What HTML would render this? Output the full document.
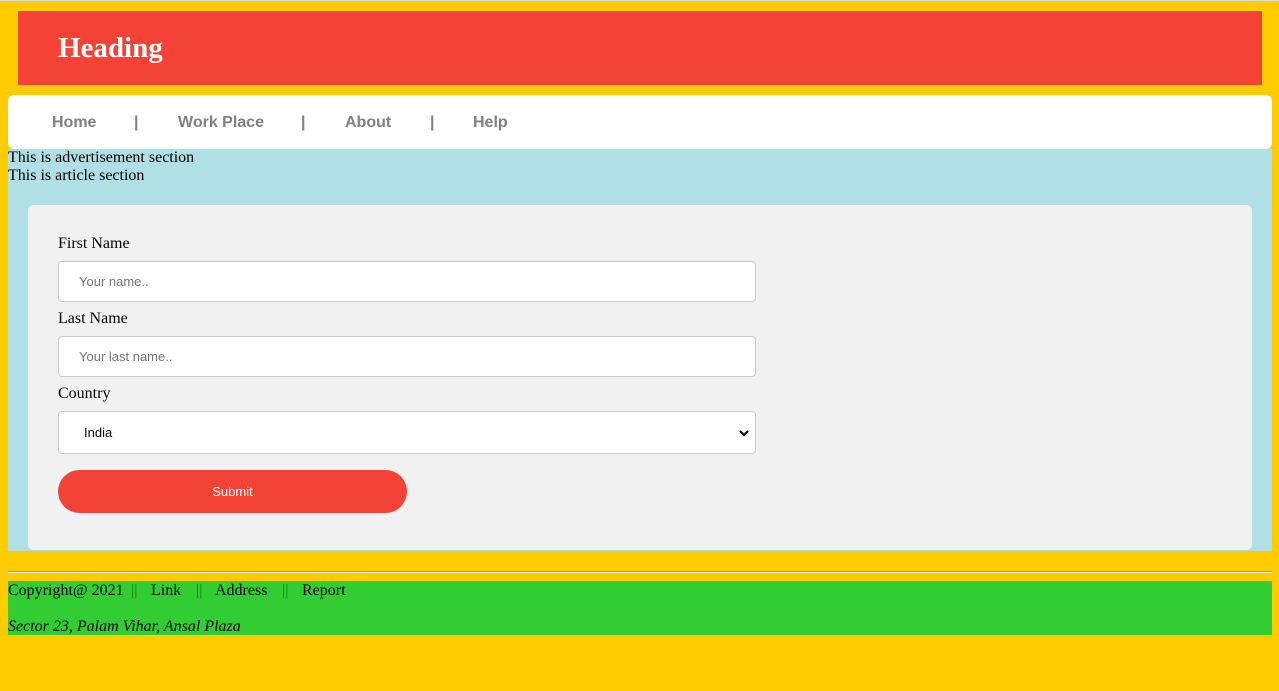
<!DOCTYPE html>
<html><head><style>
body{margin:0;width:1279px;height:691px;background:#ffcc00;position:relative;overflow:hidden;font-family:"Liberation Serif",serif;font-size:16px;}
div,span,input{position:absolute;box-sizing:border-box;}
.t{white-space:nowrap;}
.nav{font-family:"Liberation Sans",sans-serif;font-weight:bold;color:#808080;font-size:16px;top:114px;}
.inp{left:58px;width:698px;height:41px;background:#fff;border:1px solid #ccc;border-radius:4px;font-family:"Liberation Sans",sans-serif;font-size:13px;color:#757575;padding-left:20px;line-height:39px;}
.f{top:582px;}
.g{top:582px;color:#1a7a1a}
</style></head><body>
<div style="left:0;top:0;width:1279px;height:1px;background:#ddd"></div>
<div style="left:18px;top:11px;width:1244px;height:74px;background:#f44336"></div>
<div class="t" style="left:58px;top:32px;color:#fff;font-weight:bold;font-size:29px;">Heading</div>
<div style="left:8px;top:95px;width:1264px;height:54px;background:#fff;border-radius:6px"></div>
<div class="t nav" style="left:52px">Home</div>
<div class="t nav" style="left:134px">|</div>
<div class="t nav" style="left:178px">Work Place</div>
<div class="t nav" style="left:301px">|</div>
<div class="t nav" style="left:345px">About</div>
<div class="t nav" style="left:430px">|</div>
<div class="t nav" style="left:473px">Help</div>
<div style="left:8px;top:149px;width:1264px;height:402px;background:#b0dfe5"></div>
<div class="t" style="left:8px;top:149px;line-height:18px">This is advertisement section<br>This is article section</div>
<div style="left:28px;top:205px;width:1224px;height:345px;background:#f1f1f1;border-radius:5px"></div>
<div class="t" style="left:58px;top:235px">First Name</div>
<div class="inp" style="top:261px">Your name..</div>
<div class="t" style="left:58px;top:310px">Last Name</div>
<div class="inp" style="top:336px">Your last name..</div>
<div class="t" style="left:58px;top:385px">Country</div>
<div class="inp" style="top:411px;height:43px;line-height:41px;color:#000;padding-left:25px">India
<svg style="position:absolute;right:6px;top:17px" width="10" height="8" viewBox="0 0 10 8"><path d="M1 2l4 4 4-4" stroke="#000" stroke-width="2" fill="none"/></svg></div>
<div style="left:58px;top:470px;width:349px;height:43px;background:#f44336;border-radius:22px;color:#fff;font-family:'Liberation Sans',sans-serif;font-size:13px;text-align:center;line-height:43px">Submit</div>
<div style="left:8px;top:571px;width:1264px;height:2px;border-top:1px solid #999;border-bottom:1px solid #eee"></div>
<div style="left:8px;top:581px;width:1264px;height:54px;background:#32cd32"></div>
<div class="t f" style="left:8px">Copyright@ 2021</div>
<div class="t g" style="left:131px">||</div>
<div class="t f" style="left:151px">Link</div>
<div class="t g" style="left:196px">||</div>
<div class="t f" style="left:215px">Address</div>
<div class="t g" style="left:282px">||</div>
<div class="t f" style="left:302px">Report</div>
<div class="t" style="left:8px;top:618px;font-style:italic">Sector 23, Palam Vihar, Ansal Plaza</div>
</body></html>
